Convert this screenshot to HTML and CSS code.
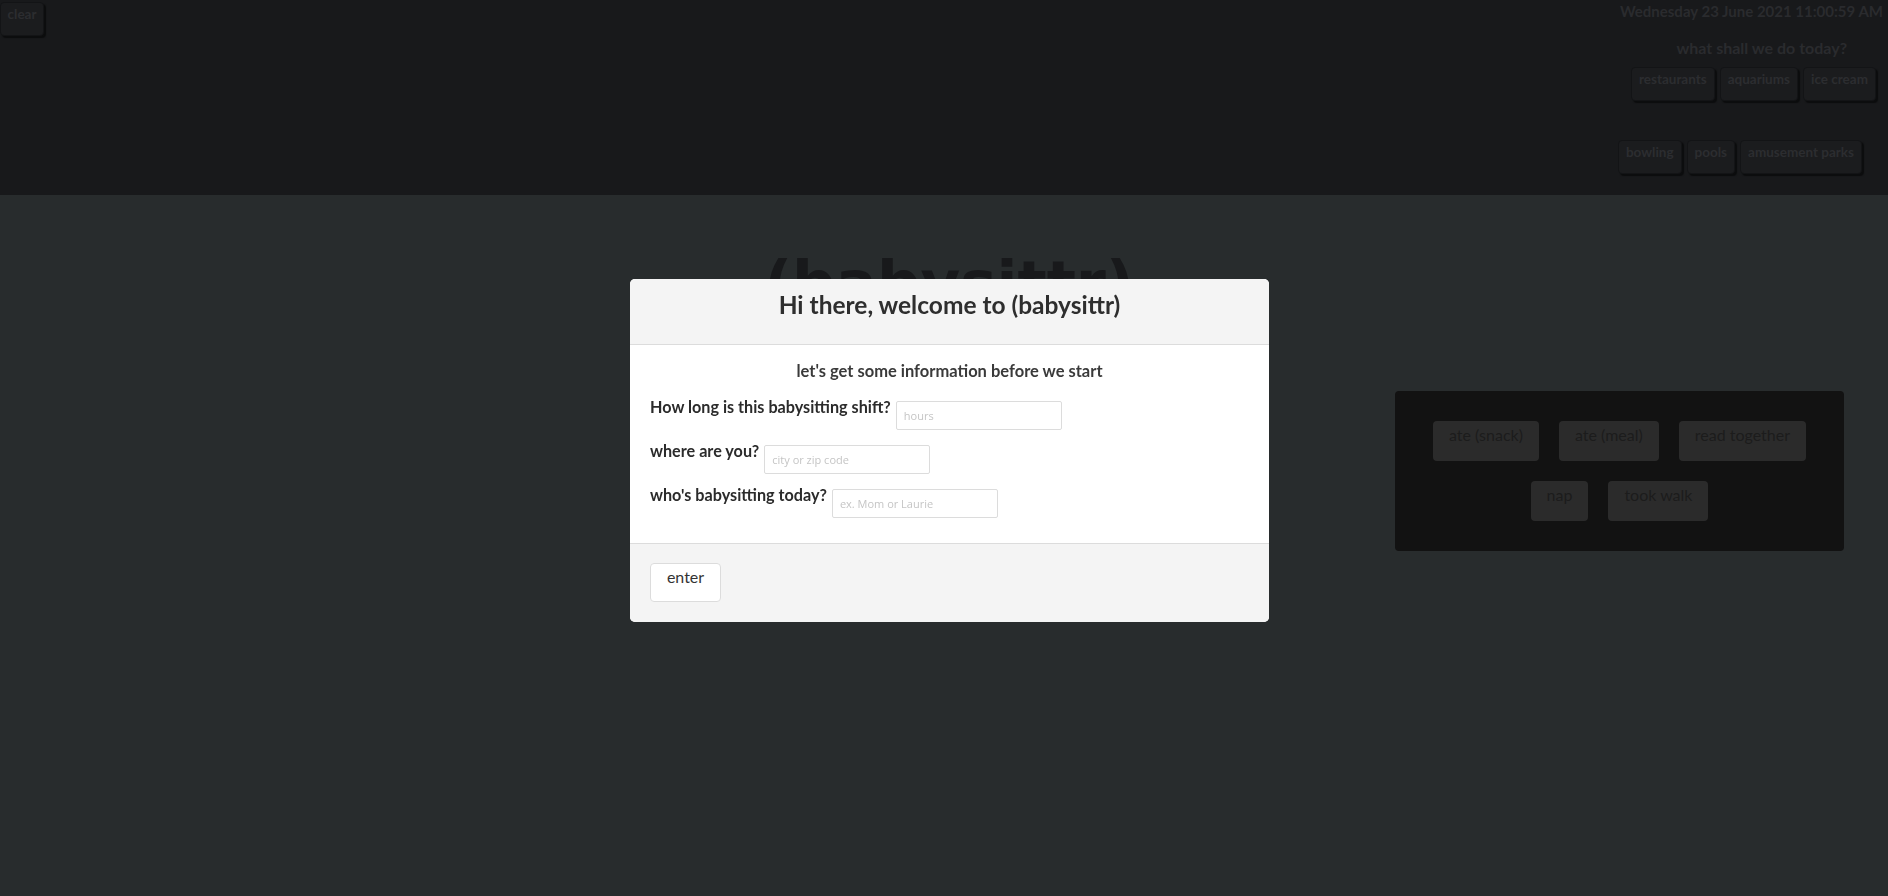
FILE: index.html
```html
<!DOCTYPE html>
<html lang="en">
<head>
<meta charset="utf-8">
<title>babysittr</title>
<link rel="stylesheet" href="styles.css">
</head>
<body>
<header class="topbar">
  <button class="btn-dark clear-btn">clear</button>
  <div class="topbar-right">
    <div class="date">Wednesday 23 June 2021 11:00:59 AM</div>
    <div class="ask">what shall we do today?</div>
    <div class="chip-row row-one">
      <button class="btn-dark">restaurants</button>
      <button class="btn-dark">aquariums</button>
      <button class="btn-dark">ice cream</button>
    </div>
    <div class="chip-row row-two">
      <button class="btn-dark">bowling</button>
      <button class="btn-dark">pools</button>
      <button class="btn-dark">amusement parks</button>
    </div>
  </div>
</header>
<main class="main">
  <h1 class="brand">(babysittr)</h1>
  <div class="panel-row">
    <div class="log-panel">
      <div class="log-line">
        <button class="log-btn">ate (snack)</button>
        <button class="log-btn">ate (meal)</button>
        <button class="log-btn">read together</button>
      </div>
      <div class="log-line">
        <button class="log-btn">nap</button>
        <button class="log-btn">took walk</button>
      </div>
    </div>
  </div>
</main>

<div class="overlay">
  <div class="modal">
    <div class="modal-head">
      <h5 class="modal-title">Hi there, welcome to (babysittr)</h5>
    </div>
    <div class="modal-body">
      <p class="intro">let's get some information before we start</p>
      <div class="field">
        <label class="field-label">How long is this babysitting shift?</label>
        <input class="field-input" type="text" placeholder="hours">
      </div>
      <div class="field">
        <label class="field-label">where are you?</label>
        <input class="field-input" type="text" placeholder="city or zip code">
      </div>
      <div class="field">
        <label class="field-label">who's babysitting today?</label>
        <input class="field-input" type="text" placeholder="ex. Mom or Laurie">
      </div>
    </div>
    <div class="modal-foot">
      <button class="enter-btn">enter</button>
    </div>
  </div>
</div>
</body>
</html>
```
FILE: styles.css
```css
* { box-sizing: border-box; }
html, body { margin: 0; padding: 0; }
body {
  width: 1888px;
  height: 896px;
  overflow: hidden;
  background: #282c2d;
  font-family: Lato, "Open Sans", sans-serif;
  color: #333;
}
button { font-family: inherit; cursor: pointer; }

.topbar {
  height: 195px;
  background: #18191b;
  display: flex;
  justify-content: space-between;
  align-items: flex-start;
}
.btn-dark {
  background: #1b1c1e;
  border: 1px solid #131416;
  border-radius: 4px;
  box-shadow: 2px 2px 1px #0c0d0e;
  color: #2c2d30;
  font-weight: 700;
  font-size: 13.5px;
  line-height: 16px;
  padding: 3px 7px 14px;
  height: 34px;
}
.clear-btn {
  margin-top: 2px;
  width: 44px;
  padding: 3px 0 14px;
}
.topbar-right {
  display: flex;
  flex-direction: column;
  align-items: flex-end;
}
.date {
  margin: 1px 5px 0 0;
  font-weight: 700;
  font-size: 15px;
  line-height: 20px;
  color: #2a2b2e;
}
.ask {
  margin: 17px 41px 0 0;
  font-weight: 700;
  font-size: 16px;
  line-height: 20px;
  color: #2a2b2e;
}
.chip-row { display: flex; gap: 5px; }
.row-one { margin: 9px 12px 0 0; }
.row-two { margin: 39px 26px 0 0; }

.main {
  height: 701px;
  padding-top: 55px;
}
.brand {
  margin: 0;
  text-align: center;
  font-family: "DejaVu Sans", sans-serif;
  font-size: 61px;
  line-height: 66px;
  font-weight: 700;
  color: #18191b;
  padding-left: 10px;
}
.panel-row {
  display: flex;
  justify-content: flex-end;
  padding-right: 44px;
  margin-top: 75px;
}
.log-panel {
  width: 449px;
  background: #121212;
  border-radius: 4px;
  padding: 20px 0;
  display: flex;
  flex-direction: column;
  align-items: center;
}
.log-line { display: flex; justify-content: center; }
.log-btn {
  margin: 10px;
  background: #2b2b2b;
  border: none;
  border-radius: 4px;
  color: #1c1c1c;
  font-size: 16px;
  line-height: 20px;
  padding: 4px 16px 16px;
  height: 40px;
}

.overlay {
  position: fixed;
  inset: 0;
  padding: 279px 0 0 630px;
}
.modal {
  width: 639px;
  background: #fff;
  border-radius: 5px;
  overflow: hidden;
}
.modal-head {
  background: #f4f4f4;
  border-bottom: 1px solid #dcdcdc;
  height: 66px;
  padding-top: 11px;
  text-align: center;
}
.modal-title {
  margin: 0;
  font-size: 24.5px;
  line-height: 29px;
  font-weight: 700;
  color: #2e2e2e;
}
.modal-body {
  padding: 16px 20px 24px;
  height: 198px;
}
.intro {
  margin: 0 0 16px;
  text-align: center;
  font-weight: 700;
  font-size: 16.5px;
  line-height: 20px;
  color: #3a3a3a;
}
.field {
  display: flex;
  align-items: flex-start;
  gap: 5px;
  margin-bottom: 11px;
}
.field-label {
  font-weight: 700;
  font-size: 16.2px;
  line-height: 20px;
  color: #2b2b2b;
}
.field-input {
  margin-top: 4px;
  width: 166px;
  height: 29px;
  border: 1px solid #dcdcdc;
  border-radius: 2px;
  padding: 0 7px;
  font-family: "Open Sans", sans-serif;
  font-size: 11px;
  color: #333;
  outline: none;
}
.field-input::placeholder { color: #c5c5c5; }
.modal-foot {
  background: #f4f4f4;
  border-top: 1px solid #dcdcdc;
  height: 79px;
  padding: 19px 20px 0;
}
.enter-btn {
  width: 71px;
  height: 39px;
  background: #fff;
  border: 1px solid #dcdcdc;
  border-radius: 4px;
  font-size: 16px;
  line-height: 20px;
  color: #333;
  padding: 3px 0 14px;
}
```
